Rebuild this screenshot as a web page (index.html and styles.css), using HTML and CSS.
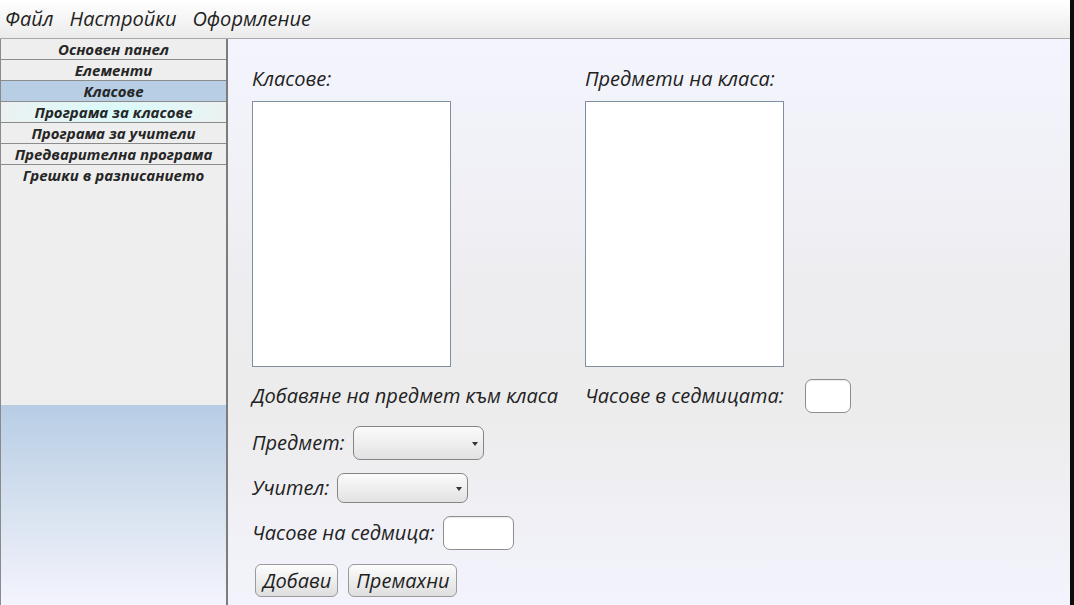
FILE: index.html
```html
<!DOCTYPE html>
<html lang="bg">
<head>
<meta charset="utf-8">
<title>Програма</title>
<link rel="stylesheet" href="styles.css">
</head>
<body>
<div class="window">
  <div class="app">
    <div class="menubar">
      <span class="menu-item">Файл</span>
      <span class="menu-item">Настройки</span>
      <span class="menu-item">Оформление</span>
    </div>
    <div class="main">
      <nav class="sidebar">
        <div class="nav-list">
          <div class="nav-item">Основен панел</div>
          <div class="nav-item">Елементи</div>
          <div class="nav-item active">Класове</div>
          <div class="nav-item hover">Програма за класове</div>
          <div class="nav-item">Програма за учители</div>
          <div class="nav-item">Предварителна програма</div>
          <div class="nav-item last">Грешки в разписанието</div>
        </div>
        <div class="nav-fill"></div>
      </nav>
      <section class="content">
        <div class="lists">
          <div class="list-col">
            <div class="label">Класове:</div>
            <div class="listbox"></div>
          </div>
          <div class="list-col">
            <div class="label">Предмети на класа:</div>
            <div class="listbox"></div>
          </div>
        </div>
        <div class="row row-head">
          <div class="label head-left">Добавяне на предмет към класа</div>
          <div class="label">Часове в седмицата:</div>
          <div class="input input-small"></div>
        </div>
        <div class="row">
          <div class="label">Предмет:</div>
          <div class="select select-subject"><span class="arrow"></span></div>
        </div>
        <div class="row">
          <div class="label">Учител:</div>
          <div class="select select-teacher"><span class="arrow"></span></div>
        </div>
        <div class="row">
          <div class="label">Часове на седмица:</div>
          <div class="input input-hours"></div>
        </div>
        <div class="row buttons">
          <button class="btn">Добави</button>
          <button class="btn">Премахни</button>
        </div>
      </section>
    </div>
  </div>
  <div class="edge"></div>
</div>
</body>
</html>
```

FILE: styles.css
```css
* { box-sizing: border-box; }

html, body {
  margin: 0;
  padding: 0;
  width: 1074px;
  height: 605px;
  overflow: hidden;
}

body {
  font-family: "Open Sans", "Noto Sans", sans-serif;
  color: #222;
}

.window {
  display: flex;
  width: 1074px;
  height: 605px;
}

.app {
  flex: 1;
  display: flex;
  flex-direction: column;
  min-width: 0;
}

.edge {
  width: 4px;
  background: #0c0c0c;
}

.menubar {
  height: 39px;
  border-bottom: 1px solid #a8a8a8;
  background: linear-gradient(#ffffff, #ebebeb);
  display: flex;
  align-items: center;
  padding-left: 5px;
  gap: 16px;
  font-style: italic;
  font-size: 20px;
  color: #222;
}

.menu-item { line-height: 26px; }

.main {
  flex: 1;
  display: flex;
  min-height: 0;
}

.sidebar {
  width: 228px;
  border-left: 1px solid #8a8a8a;
  border-right: 2px solid #7c7c7c;
  display: flex;
  flex-direction: column;
}

.nav-list {
  height: 366px;
  background: #eeeeee;
}

.nav-item {
  height: 21px;
  border-bottom: 1px solid #8c8c8c;
  text-align: center;
  font-size: 15px;
  font-weight: bold;
  font-style: italic;
  line-height: 20px;
  color: #262626;
  white-space: nowrap;
}

.nav-item.last { border-bottom: none; }

.nav-item.active { background: #b7cee5; }

.nav-item.hover {
  background: radial-gradient(ellipse 60% 120% at 50% 50%, #d6fbfb 0%, #e6f5f5 60%, #eeeeee 100%);
}

.nav-fill {
  flex: 1;
  background: linear-gradient(#b7cde5, #d6e1ef 50%, #f4f4fd);
}

.content {
  flex: 1;
  background: linear-gradient(#f4f4fe 0%, #ededf0 45%, #ececec 65%, #f3f3fd 100%);
  padding: 28px 0 0 24px;
}

.label {
  font-size: 20px;
  font-style: italic;
  line-height: 24px;
  color: #222;
  white-space: nowrap;
}

.lists {
  display: flex;
  gap: 134px;
}

.list-col {
  display: flex;
  flex-direction: column;
  gap: 10px;
}

.listbox {
  width: 199px;
  height: 266px;
  background: #ffffff;
  border: 1px solid #7f8fa0;
}

.row {
  display: flex;
  align-items: center;
  gap: 8px;
  margin-top: 13px;
}

.row-head {
  margin-top: 12px;
  height: 34px;
  gap: 7px;
}

.head-left { width: 326px; }

.row-head .input { margin-left: 14px; }

.input {
  background: #ffffff;
  border: 1px solid #8e8e8e;
  border-radius: 7px;
  box-shadow: inset 0 1px 1px rgba(0,0,0,0.08);
  height: 34px;
}

.input-small { width: 46px; }
.input-hours { width: 71px; }

.select {
  position: relative;
  height: 34px;
  border: 1px solid #858585;
  border-radius: 7px;
  background: linear-gradient(#fbfbfb, #ececec 60%, #e2e2e2);
}

.select-subject { width: 131px; }
.select-teacher { width: 131px; height: 30px; }

.arrow {
  position: absolute;
  right: 5px;
  top: 50%;
  margin-top: -1px;
  width: 0;
  height: 0;
  border-left: 3px solid transparent;
  border-right: 3px solid transparent;
  border-top: 4px solid #333;
}

.buttons {
  margin-top: 14px;
  padding-left: 3px;
  gap: 10px;
}

.btn {
  font-family: "Open Sans", "Noto Sans", sans-serif;
  font-size: 20px;
  font-style: italic;
  color: #1e1e1e;
  height: 33px;
  padding: 0 6px 0 7px;
  border: 1px solid #9a9a9a;
  border-radius: 6px;
  background: linear-gradient(#fdfdfd, #ececec 55%, #dedede);
  line-height: 28px;
}
```
